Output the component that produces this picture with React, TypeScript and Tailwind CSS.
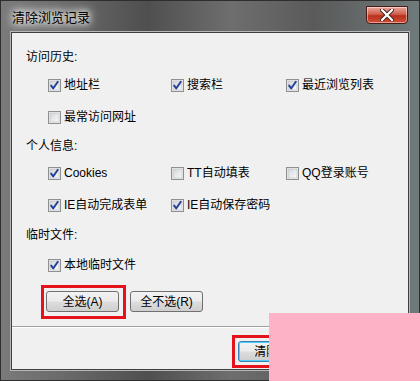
import React from "react";

const font = { fontFamily: '"Liberation Sans", "Noto Sans CJK SC", sans-serif' };

function Box({ checked }: { checked: boolean }) {
  return (
    <svg width="13" height="13" viewBox="0 0 13 13" className="shrink-0">
      <defs>
        <linearGradient id="cbg" x1="0" y1="0" x2="1" y2="1">
          <stop offset="0" stopColor="#d2d4d8" />
          <stop offset="1" stopColor="#fbfbfb" />
        </linearGradient>
      </defs>
      <rect x="0.5" y="0.5" width="12" height="12" fill="#f4f4f4" stroke="#8e8f8f" />
      <rect x="2" y="2" width="9" height="9" fill="url(#cbg)" stroke="#c4c6ca" strokeWidth="0.8" />
      {checked && (
        <path d="M3.2 6.6 L5.2 9.4 L9.8 2.8" fill="none" stroke="#23409a" strokeWidth="1.9" strokeLinejoin="round" strokeLinecap="round" />
      )}
    </svg>
  );
}

function Item({ checked, label }: { checked: boolean; label: string }) {
  return (
    <div className="flex items-center gap-[3px] text-[12px] leading-none text-black whitespace-nowrap">
      <Box checked={checked} />
      <span>{label}</span>
    </div>
  );
}

function Btn({ label, focus }: { label: string; focus?: boolean }) {
  return (
    <div
      className={`flex h-[21px] w-[73px] items-center justify-center rounded-[3px] border text-[12px] leading-none text-black ${
        focus ? "border-[#3c7fb1] shadow-[inset_0_0_0_1px_#48d1fd]" : "border-[#707070]"
      } bg-[linear-gradient(#f2f2f2_0%,#ebebeb_48%,#dddddd_52%,#cfcfcf_100%)]`}
    >
      {label}
    </div>
  );
}

export default function App() {
  return (
    <div style={font} className="relative h-[381px] w-[420px] overflow-hidden bg-white">
      <div className="flex h-[381px] w-[420px] flex-col border border-[#2e2e2e] bg-[linear-gradient(90deg,#7a7a7a_0%,#6a6a6a_15%,#4f4f4f_35%,#6e6e6e_55%,#5a5a5a_75%,#6f7a7a_100%)] px-[10px] pb-[10px]">
        <div className="flex h-[31px] items-start justify-between">
          <div className="ml-[1px] mt-[10px] text-[13px] leading-none text-black [text-shadow:0_0_6px_#fff,0_0_10px_#fff,0_0_14px_#fff]">
            清除浏览记录
          </div>
          <div className="mr-[1px] mt-[5px] flex h-[18px] w-[42px] items-center justify-center rounded-b-[4px] border border-[#4a1a14] bg-[linear-gradient(#e8a89c_0%,#d0604c_45%,#b8301c_55%,#d0503a_100%)] shadow-[inset_0_0_0_1px_rgba(255,255,255,0.45)]">
            <svg width="14" height="12" viewBox="0 0 14 12">
              <path d="M2 1 L12 11 M12 1 L2 11" stroke="#3a1a14" strokeWidth="4" strokeLinecap="round" />
              <path d="M2 1 L12 11 M12 1 L2 11" stroke="#ffffff" strokeWidth="2.4" strokeLinecap="round" />
            </svg>
          </div>
        </div>
        <div className="flex flex-1 flex-col border border-[#404040] bg-[#f0f0f0] shadow-[0_0_0_1px_#b8b8b8]">
          <div className="h-[14px]" />
          <div className="flex h-[20px] items-center pl-[14px] text-[12px] leading-none">访问历史:</div>
          <div className="grid h-[36px] grid-cols-[123px_115px_auto] items-center pl-[36px]">
            <Item checked label="地址栏" />
            <Item checked label="搜索栏" />
            <Item checked label="最近浏览列表" />
          </div>
          <div className="grid h-[28px] grid-cols-[123px_115px_auto] items-center pl-[36px]">
            <Item checked={false} label="最常访问网址" />
          </div>
          <div className="flex h-[30px] items-center pl-[14px] text-[12px] leading-none">个人信息:</div>
          <div className="grid h-[24px] grid-cols-[123px_115px_auto] items-center pl-[36px]">
            <Item checked label="Cookies" />
            <Item checked={false} label="TT自动填表" />
            <Item checked={false} label="QQ登录账号" />
          </div>
          <div className="grid h-[40px] grid-cols-[123px_115px_auto] items-center pl-[36px]">
            <Item checked label="IE自动完成表单" />
            <Item checked label="IE自动保存密码" />
          </div>
          <div className="flex h-[20px] items-center pl-[14px] text-[12px] leading-none">临时文件:</div>
          <div className="grid h-[40px] grid-cols-[123px_115px_auto] items-center pl-[36px]">
            <Item checked label="本地临时文件" />
          </div>
          <div className="flex items-start gap-[4px] pl-[29px]">
            <div className="border-[3px] border-[#e4121a] pb-[4px] pl-[2px] pr-[4px] pt-[3px]">
              <Btn label="全选(A)" />
            </div>
            <div className="pt-[6px]">
              <Btn label="全不选(R)" />
            </div>
          </div>
          <div className="mt-[7px] h-[2px] border-t border-[#a0a0a0] bg-white" />
          <div className="flex pl-[220px] pt-[7px]">
            <div className="border-[3px] border-[#e4121a] p-[3px]">
              <Btn label="清除(D)" focus />
            </div>
          </div>
        </div>
      </div>
      <div className="absolute left-[269px] top-[313px] h-[68px] w-[151px] bg-[#fdb2c6]" />
    </div>
  );
}
